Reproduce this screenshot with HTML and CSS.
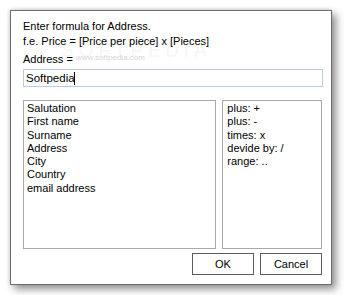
FILE: index.html
```html
<!DOCTYPE html>
<html lang="en">
<head>
    <meta charset="UTF-8">
    <title>Formula</title>
    <link rel="stylesheet" href="styles.css">
</head>
<body>
    <div class="dialog">
        <div class="mark">SOFTPEDIA</div>
        <div class="mark-url">www.softpedia.com</div>
        <p class="prompt">Enter formula for Address.<br>f.e. Price = [Price per piece] x [Pieces]</p>
        <label class="label" for="formula">Address =</label>
        <div class="field">
            <input type="text" id="formula" value="Softpedia">
            <span class="caret"></span>
        </div>
        <div class="lists">
            <ul class="list fields">
                <li>Salutation</li>
                <li>First name</li>
                <li>Surname</li>
                <li>Address</li>
                <li>City</li>
                <li>Country</li>
                <li>email address</li>
            </ul>
            <ul class="list ops">
                <li>plus: +</li>
                <li>plus: -</li>
                <li>times: x</li>
                <li>devide by: /</li>
                <li>range: ..</li>
            </ul>
        </div>
        <div class="buttons">
            <button class="btn">OK</button>
            <button class="btn">Cancel</button>
        </div>
    </div>
</body>
</html>
```

FILE: styles.css
```css
* {
    margin: 0;
    padding: 0;
    box-sizing: border-box;
}

body {
    background-color: #fff;
    padding: 10px;
    font-family: "Liberation Sans", Arial, sans-serif;
    font-size: 11px;
    color: #000;
}

.dialog {
    position: relative;
    width: 322px;
    height: 275px;
    border: 1px solid #6e6e6e;
    background-color: #fff;
    padding: 8px 9px 9px 12px;
    display: flex;
    flex-direction: column;
    box-shadow: 4px 4px 8px rgba(0, 0, 0, 0.45), -1px -1px 3px rgba(0, 0, 0, 0.12);
}

/* watermark */
.mark {
    position: absolute;
    left: 50px;
    top: 28px;
    font-size: 20px;
    font-weight: bold;
    letter-spacing: 4px;
    color: rgba(0, 0, 0, 0.035);
}

.mark-url {
    position: absolute;
    left: 65px;
    top: 42px;
    font-size: 8px;
    color: #d6d6d6;
}

.prompt {
    line-height: 15px;
    position: relative;
}

.label {
    display: block;
    margin-top: 3px;
    line-height: 15px;
    position: relative;
}

.field {
    position: relative;
    margin-top: 2px;
}

.field input {
    width: 300px;
    height: 18px;
    border: 1px solid #b7cde6;
    padding: 0 2px;
    font-family: "Liberation Sans", Arial, sans-serif;
    font-size: 11.5px;
    color: #000;
    outline: none;
}

.caret {
    position: absolute;
    left: 51px;
    top: 3px;
    width: 1px;
    height: 13px;
    background-color: #000;
}

.lists {
    display: flex;
    gap: 6px;
    margin-top: 13px;
    height: 149px;
}

.list {
    list-style: none;
    border: 1px solid #a9a9a9;
    padding: 1px 3px;
    line-height: 13.3px;
}

.fields {
    width: 194px;
}

.ops {
    width: 100px;
    padding-left: 4px;
}

.buttons {
    display: flex;
    justify-content: flex-end;
    gap: 6px;
    margin-top: 4px;
}

.btn {
    width: 62px;
    height: 22px;
    border: 1px solid #5c5c5c;
    background-color: #fff;
    font-family: "Liberation Sans", Arial, sans-serif;
    font-size: 11px;
    color: #000;
}
```
